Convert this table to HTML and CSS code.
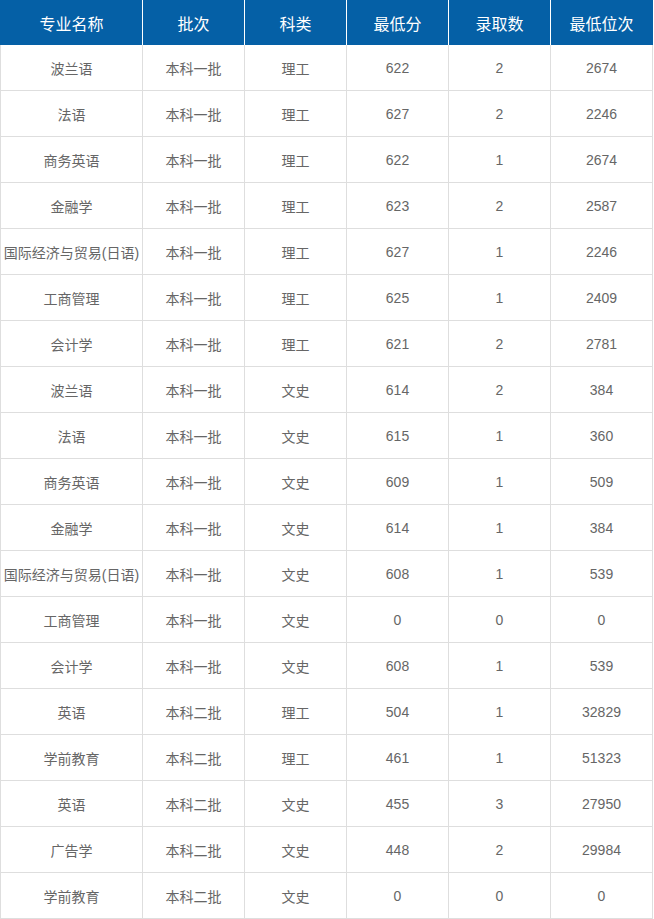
FILE: index.html
```html
<!DOCTYPE html>
<html lang="zh">
<head>
<meta charset="utf-8">
<title>录取分数</title>
<link rel="stylesheet" href="styles.css">
</head>
<body>
<table class="score-table">
  <colgroup>
    <col class="col-name">
    <col class="col-std"><col class="col-std"><col class="col-std"><col class="col-std"><col class="col-std">
  </colgroup>
  <thead>
    <tr><th>专业名称</th><th>批次</th><th>科类</th><th>最低分</th><th>录取数</th><th>最低位次</th></tr>
  </thead>
  <tbody>
    <tr><td>波兰语</td><td>本科一批</td><td>理工</td><td>622</td><td>2</td><td>2674</td></tr>
    <tr><td>法语</td><td>本科一批</td><td>理工</td><td>627</td><td>2</td><td>2246</td></tr>
    <tr><td>商务英语</td><td>本科一批</td><td>理工</td><td>622</td><td>1</td><td>2674</td></tr>
    <tr><td>金融学</td><td>本科一批</td><td>理工</td><td>623</td><td>2</td><td>2587</td></tr>
    <tr><td>国际经济与贸易(日语)</td><td>本科一批</td><td>理工</td><td>627</td><td>1</td><td>2246</td></tr>
    <tr><td>工商管理</td><td>本科一批</td><td>理工</td><td>625</td><td>1</td><td>2409</td></tr>
    <tr><td>会计学</td><td>本科一批</td><td>理工</td><td>621</td><td>2</td><td>2781</td></tr>
    <tr><td>波兰语</td><td>本科一批</td><td>文史</td><td>614</td><td>2</td><td>384</td></tr>
    <tr><td>法语</td><td>本科一批</td><td>文史</td><td>615</td><td>1</td><td>360</td></tr>
    <tr><td>商务英语</td><td>本科一批</td><td>文史</td><td>609</td><td>1</td><td>509</td></tr>
    <tr><td>金融学</td><td>本科一批</td><td>文史</td><td>614</td><td>1</td><td>384</td></tr>
    <tr><td>国际经济与贸易(日语)</td><td>本科一批</td><td>文史</td><td>608</td><td>1</td><td>539</td></tr>
    <tr><td>工商管理</td><td>本科一批</td><td>文史</td><td>0</td><td>0</td><td>0</td></tr>
    <tr><td>会计学</td><td>本科一批</td><td>文史</td><td>608</td><td>1</td><td>539</td></tr>
    <tr><td>英语</td><td>本科二批</td><td>理工</td><td>504</td><td>1</td><td>32829</td></tr>
    <tr><td>学前教育</td><td>本科二批</td><td>理工</td><td>461</td><td>1</td><td>51323</td></tr>
    <tr><td>英语</td><td>本科二批</td><td>文史</td><td>455</td><td>3</td><td>27950</td></tr>
    <tr><td>广告学</td><td>本科二批</td><td>文史</td><td>448</td><td>2</td><td>29984</td></tr>
    <tr><td>学前教育</td><td>本科二批</td><td>文史</td><td>0</td><td>0</td><td>0</td></tr>
  </tbody>
</table>
</body>
</html>
```
FILE: styles.css
```css
html, body {
  margin: 0;
  padding: 0;
  background: #ffffff;
}

body {
  font-family: "Liberation Sans", "Noto Sans CJK SC", sans-serif;
}

.score-table {
  border-collapse: collapse;
  table-layout: fixed;
  width: 652px;
}

.col-name { width: 142px; }
.col-std { width: 102px; }

.score-table th,
.score-table td {
  padding: 0;
  text-align: center;
  white-space: nowrap;
  overflow: hidden;
}

.score-table th {
  height: 45px;
  background: #0560a6;
  color: #ffffff;
  font-size: 16px;
  font-weight: normal;
  border-left: 1px solid #ffffff;
  border-right: 1px solid #ffffff;
}

.score-table th:first-child { border-left-color: #0560a6; }
.score-table th:last-child { border-right-color: #0560a6; }

.score-table td {
  height: 45px;
  color: #666666;
  font-size: 14px;
  border: 1px solid #dedede;
}

.score-table thead + tbody tr:first-child td { border-top: none; }
```
